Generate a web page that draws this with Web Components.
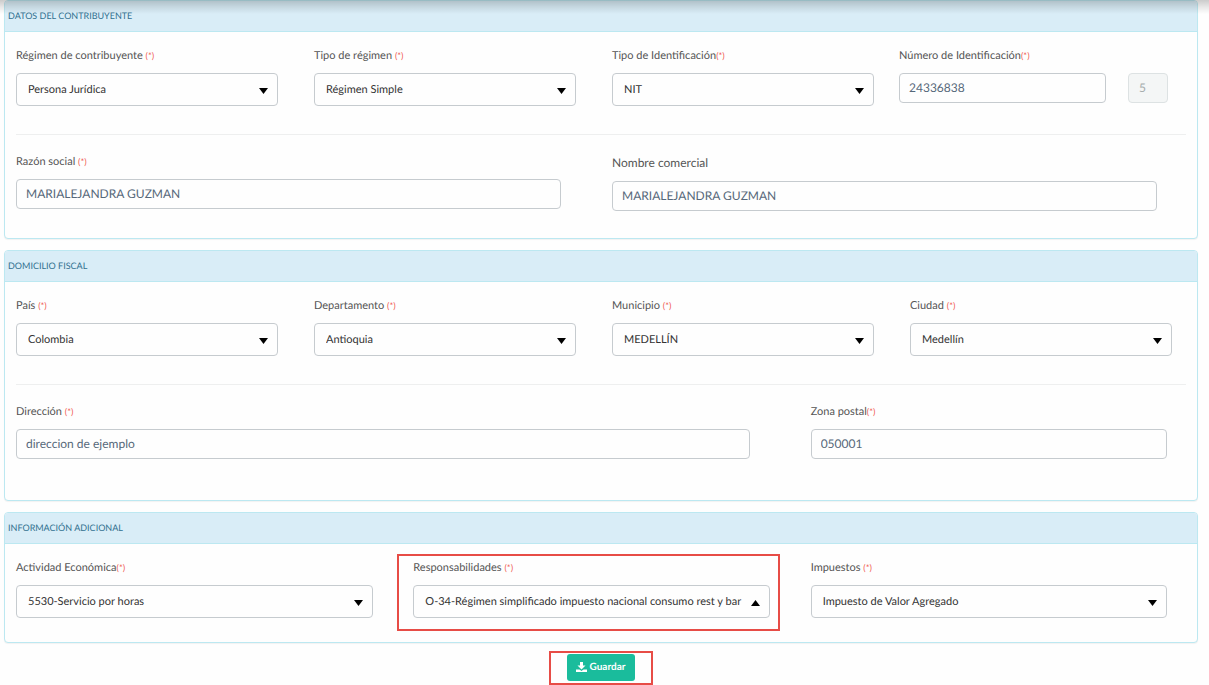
<!DOCTYPE html>
<html lang="es">
<head>
<meta charset="utf-8">
<title>Datos del contribuyente</title>
<style>
body { margin: 0; background: #fefefe; font-family: Lato, "Liberation Sans", sans-serif; color: #4a4a4a; text-rendering: geometricPrecision; }
</style>
</head>
<body>
<taxpayer-form></taxpayer-form>

<template id="panel-tpl">
<style>
:host { display: block; box-sizing: border-box; border: 1px solid #bce8f1; border-radius: 4px; box-shadow: 0 1px 1px rgba(0,0,0,.05); background: #fefefe; }
h2 { margin: 0; padding: 0 3px; height: 30px; line-height: 30px; font-size: 9px; font-weight: 400; color: #31708f; background: #d9edf7; border-bottom: 1px solid #bce8f1; border-radius: 3px 3px 0 0; text-transform: uppercase; }
</style>
<h2></h2><slot></slot>
</template>

<template id="row-tpl">
<style>
:host { display: grid; grid-template-columns: repeat(12, minmax(0, 1fr)); align-items: start; }
</style>
<slot></slot>
</template>

<template id="field-tpl">
<style>
:host { display: block; box-sizing: border-box; padding: 0 11px; position: relative; min-width: 0; grid-column: span var(--span, 3); }
:host([compact]) { padding: 0; grid-column: auto; }
label { display: block; height: 16px; line-height: 16px; margin-bottom: 9px; font-size: 11px; white-space: pre; color: #555; }
:host([large]) label { font-size: 12px; line-height: 18px; height: 18px; }
.req { color: #f05a50; font-size: 9px; }
.box { position: relative; width: 95%; }
:host([compact]) .box { width: 100%; }
input, select { display: block; box-sizing: border-box; width: 100%; margin: 0; border: 1px solid #c6cbcf; border-radius: 4px; background: #fefefe; font-family: inherit; text-rendering: inherit; outline: 0; }
input { height: 30px; padding: 0 9px 2px; font-size: 12px; color: #56687a; }
input:disabled { background: #f4f6f6; border-color: #dde2e3; color: #a4abab; padding: 0 10px 2px; }
select { appearance: none; height: 33px; padding: 0 18px 1px 11px; font-size: 11px; color: #333; overflow: hidden; }
svg { position: absolute; right: 10px; top: 15px; width: 9px; height: 6px; pointer-events: none; }
:host([open]) svg { transform: rotate(180deg); }
.mark { display: none; }
:host([marked]) .mark { display: block; position: absolute; inset: -6px 20px -13px -5px; border: 2px solid #e74c46; pointer-events: none; }
</style>
<label for="control"></label>
<div class="box"></div>
<div class="mark"></div>
</template>

<template id="button-tpl">
<style>
:host { display: inline-block; }
button { display: flex; align-items: center; gap: 3px; height: 27px; padding: 0 10px 1px 9px; border: 0; border-radius: 3px; background: #1abc9c; color: #fff; font: 700 10px Lato, sans-serif; text-rendering: inherit; }
svg { width: 11px; height: 10px; }
</style>
<button type="submit"><svg viewBox="0 0 22 20" aria-hidden="true"><path fill="#fff" d="M8 0h6v7h5l-8 8-8-8h5zM0 15h7l4 3 4-3h7v5H0z"/></svg><slot></slot></button>
</template>

<template id="form-tpl">
<style>
:host { display: block; position: relative; }
form { display: block; padding: 0 11px 0 4px; }
form-panel + form-panel { margin-top: 11px; }
form-row { padding-top: 16px; }
hr { height: 1px; margin: 28px 11px 3px; border: 0; background: #eeefef; }
.id { display: grid; grid-column: span 3; grid-template-columns: 207fr 40fr; gap: 22px; padding-right: 29px; align-items: end; }
.p1 { padding-bottom: 27px; }
.p2 { padding-bottom: 41px; }
.p3 { padding-bottom: 24px; }
.actions { display: flex; justify-content: center; padding-top: 8px; }
.mark { padding: 1px 16px 2px; border: 2px solid #e74c46; line-height: 0; }
.shade { position: absolute; inset: 0 0 auto; height: 14px; background: linear-gradient(rgba(0,0,0,.2), rgba(0,0,0,.09) 50%, rgba(0,0,0,0)); pointer-events: none; }
</style>
<form>
<form-panel heading="Datos del contribuyente" class="p1">
<form-row>
<form-field kind="select" label="Régimen de contribuyente " required value="Persona Jurídica"></form-field>
<form-field kind="select" label="Tipo de régimen " required value="Régimen Simple"></form-field>
<form-field kind="select" label="Tipo de Identificación" required value="NIT"></form-field>
<div class="id">
<form-field compact label="Número de Identificación" required value="24336838"></form-field>
<form-field compact disabled hint="Dígito de verificación" value="5"></form-field>
</div>
</form-row>
<hr>
<form-row>
<form-field span="6" label="Razón social " required value="MARIALEJANDRA GUZMAN"></form-field>
<form-field span="6" large label="Nombre comercial" value="MARIALEJANDRA GUZMAN"></form-field>
</form-row>
</form-panel>
<form-panel heading="Domicilio fiscal" class="p2">
<form-row>
<form-field kind="select" label="País " required value="Colombia"></form-field>
<form-field kind="select" label="Departamento " required value="Antioquia"></form-field>
<form-field kind="select" label="Municipio " required value="MEDELLÍN"></form-field>
<form-field kind="select" label="Ciudad " required value="Medellín"></form-field>
</form-row>
<hr>
<form-row>
<form-field span="8" label="Dirección " required value="direccion de ejemplo"></form-field>
<form-field span="4" label="Zona postal" required value="050001"></form-field>
</form-row>
</form-panel>
<form-panel heading="Información adicional" class="p3">
<form-row>
<form-field span="4" kind="select" label="Actividad Económica" required value="5530-Servicio por horas"></form-field>
<form-field span="4" kind="select" open marked label="Responsabilidades " required value="O-34-Régimen simplificado impuesto nacional consumo rest y bar"></form-field>
<form-field span="4" kind="select" label="Impuestos " required value="Impuesto de Valor Agregado"></form-field>
</form-row>
</form-panel>
<div class="actions"><div class="mark"><save-button>Guardar</save-button></div></div>
</form>
<div class="shade"></div>
</template>

<script>
const stamp = (host, id) => {
  const root = host.attachShadow({ mode: 'open' });
  root.append(document.getElementById(id).content.cloneNode(true));
  return root;
};

customElements.define('form-panel', class extends HTMLElement {
  connectedCallback() {
    if (this.shadowRoot) return;
    stamp(this, 'panel-tpl').querySelector('h2').textContent = this.getAttribute('heading');
  }
});

customElements.define('form-row', class extends HTMLElement {
  connectedCallback() { if (!this.shadowRoot) stamp(this, 'row-tpl'); }
});

customElements.define('form-field', class extends HTMLElement {
  connectedCallback() {
    if (this.shadowRoot) return;
    const root = stamp(this, 'field-tpl');
    const label = root.querySelector('label');
    const box = root.querySelector('.box');
    if (this.hasAttribute('span')) this.style.setProperty('--span', this.getAttribute('span'));
    const value = this.getAttribute('value');
    const isSelect = this.getAttribute('kind') === 'select';
    const control = document.createElement(isSelect ? 'select' : 'input');
    control.id = 'control';
    if (isSelect) {
      control.add(new Option(value, value));
    } else {
      control.type = 'text';
      control.value = value;
    }
    control.disabled = this.hasAttribute('disabled');
    box.append(control);
    if (isSelect) box.insertAdjacentHTML('beforeend', '<svg viewBox="0 0 9 6" aria-hidden="true"><path d="M0 0h9L4.500 6z"/></svg>');
    if (this.hasAttribute('label')) {
      label.textContent = this.getAttribute('label');
      if (this.hasAttribute('required')) {
        const mark = document.createElement('span');
        mark.className = 'req';
        mark.textContent = '(*)';
        label.append(mark);
      }
    } else {
      label.remove();
      control.setAttribute('aria-label', this.getAttribute('hint'));
    }
  }
});

customElements.define('save-button', class extends HTMLElement {
  connectedCallback() { if (!this.shadowRoot) stamp(this, 'button-tpl'); }
});

customElements.define('taxpayer-form', class extends HTMLElement {
  connectedCallback() { if (!this.shadowRoot) stamp(this, 'form-tpl'); }
});
</script>
</body>
</html>
